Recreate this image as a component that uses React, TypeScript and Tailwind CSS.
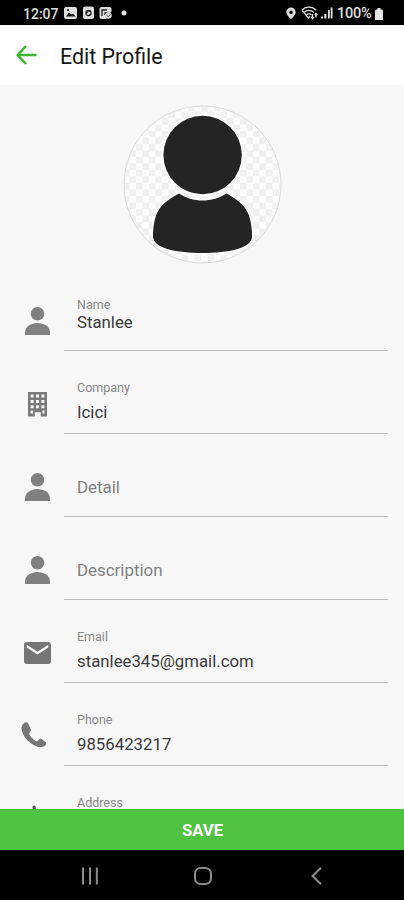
import React from 'react';

type IconName = 'person' | 'company' | 'email' | 'phone' | 'address';

interface Field {
  label: string;
  value?: string;
  icon: IconName;
  compact?: boolean;
}

const FIELDS: Field[] = [
  { label: 'Name', value: 'Stanlee', icon: 'person', compact: true },
  { label: 'Company', value: 'Icici', icon: 'company' },
  { label: 'Detail', icon: 'person' },
  { label: 'Description', icon: 'person' },
  { label: 'Email', value: 'stanlee345@gmail.com', icon: 'email' },
  { label: 'Phone', value: '9856423217', icon: 'phone' },
  { label: 'Address', value: '', icon: 'address' },
];

const FieldIcon: React.FC<{ name: IconName }> = ({ name }) => {
  switch (name) {
    case 'person':
      return (
        <svg className="mt-[38.5px] ml-[25px] h-7 w-[25px]" viewBox="0 0 25 28" fill="#808080">
          <circle cx="12.5" cy="6.8" r="6.8" />
          <path d="M0 28v-2.500C0 19.500 6 16 12.500 16S25 19.500 25 25.500V28z" />
        </svg>
      );
    case 'company':
      return (
        <svg className="mt-[41px] ml-7 h-[25px] w-[19px]" viewBox="0 0 19 25" fill="#7a7a7a">
          <path
            fillRule="evenodd"
            d="M0 0h19v24.500h-6.300v-4.200H6.800v4.200H0zM2.600 2.600v3h3v-3zM8 2.600v3h3v-3zM13.400 2.600v3h3v-3zM2.600 8v3h3V8zM8 8v3h3V8zM13.400 8v3h3V8zM2.600 13.200v3h3v-3zM8 13.200v3h3v-3zM13.400 13.200v3h3v-3zM2.600 18.600v3h2.400v-3zM14.500 18.600v3h2v-3z"
          />
        </svg>
      );
    case 'email':
      return (
        <svg className="mt-[42px] ml-6 h-[22px] w-[27px]" viewBox="2 4 20 16" preserveAspectRatio="none" fill="#757575">
          <path d="M20 4H4c-1.100 0-2 .9-2 2v12c0 1.100.9 2 2 2h16c1.100 0 2-.9 2-2V6c0-1.100-.9-2-2-2zm0 4l-8 5-8-5V6l8 5 8-5z" />
        </svg>
      );
    case 'phone':
      return (
        <svg className="mt-[39px] ml-[21px] h-[26px] w-[26px]" viewBox="0 0 26 26" fill="#757575">
          <path d="M4.500.3C3 .8.800 3 .5 5.500c-.2 5 3.300 10.300 7.200 14 4 3.600 8.500 5.900 12.500 5.600 2.200-.2 4.300-1.300 5-3.100.3-.8.100-1.400-.5-1.900l-4.400-3c-.7-.5-1.500-.4-2.100.1l-2.200 2.300c-3-1.200-6.600-4.700-8-8.100L9.500 9.300c.6-.5.7-1.200.4-1.900L7.100 1.300C6.600.3 5.700-.1 4.500.3z" />
        </svg>
      );
    case 'address':
      return (
        <svg className="mt-[39px] ml-[24px] h-[26px] w-[26px]" viewBox="0 0 26 26" fill="#555">
          <path d="M10 .5c1.200 0 1.800.9 1.800 2.500v3H8.500V2.500C8.500 1.200 9 .5 10 .5z" />
        </svg>
      );
  }
};

const FieldRow: React.FC<{ field: Field }> = ({ field }) => {
  const { label, value, icon, compact } = field;
  return (
    <div className="flex h-[83px] shrink-0">
      <div className="w-16 shrink-0">
        <FieldIcon name={icon} />
      </div>
      <div className="flex h-[83px] w-[324px] flex-col border-b border-[#bdbdbd] pl-[13px]">
        {value !== undefined ? (
          <>
            <span className="mt-[29px] h-4 text-[12.500px] leading-4 text-[#868686]">{label}</span>
            <span
              className={`h-5 text-[16.800px] leading-5 text-[#3a3a3a] ${compact ? '-mt-px' : 'mt-[6px]'}`}
            >
              {value}
            </span>
          </>
        ) : (
          <span className="mt-[43px] h-5 text-[16.900px] leading-5 text-[#808080]">{label}</span>
        )}
      </div>
    </div>
  );
};

const StatusBar: React.FC = () => (
  <div className="flex h-[25px] shrink-0 items-center bg-black pl-[23px] text-[14.500px] leading-none font-medium text-[#dedede]">
    <span className="w-[41px] pt-[3px] text-[14px]">12:07</span>
    <svg className="h-[13px] w-[64px]" viewBox="0 0 64 13" fill="#dedede">
      <rect x="0" y="1" width="13" height="12" rx="2" />
      <path d="M2 10.500l3-4 2.500 2 1.500-1 2.500 3z" fill="#111" />
      <circle cx="4" cy="4" r="1" fill="#111" />
      <rect x="19" y="0.500" width="11" height="12.500" rx="2" />
      <circle cx="24.500" cy="7" r="3.200" fill="#222" />
      <path d="M22.200 8.500l2.300-3 2.500 1.200-2.500 2.300z" />
      <path d="M37.500 1h8a2 2 0 012 2v3l-5 2v5h-5a2 2 0 01-2-2V3a2 2 0 012-2z" />
      <path d="M38 10V4h5M41 9V7h4" fill="none" stroke="#222" strokeWidth="1.300" />
      <circle cx="44.500" cy="9.500" r="3.200" />
      <path d="M43 9.500l1.200 1.200 2-2.200" fill="none" stroke="#222" />
      <circle cx="60" cy="7" r="2.500" />
    </svg>
    <svg className="ml-[157px] h-[14px] w-[50px]" viewBox="285 6.500 50 14" fill="#dedede">
      <path
        fillRule="evenodd"
        d="M291 8a4.700 4.700 0 00-4.700 4.700C286.300 15.500 291 19.500 291 19.500s4.700-4 4.700-6.800A4.700 4.700 0 00291 8zm0 2.900a1.800 1.800 0 110 3.600 1.800 1.800 0 010-3.600z"
      />
      <g fill="none" stroke="#dedede" strokeWidth="1.300">
        <path d="M301.700 10.800c4-4.300 10.600-4.300 14.600 0M304 13c3-2.700 7-2.700 10 0M302 10.800l6.500 7.700 1.500-1.800M306.500 15.500c1.500-1.300 3.500-1.300 5 0" />
        <path d="M312.500 14.500v4.500M311 17.500l1.500 1.500 1.500-1.500M316 18v-4M314.700 15.200l1.300-1.300 1.300 1.300" />
      </g>
      <path d="M321 17h2.200v2H321zM324.300 14.500h2.200V19h-2.200zM328 10.500h1.800V19H328zM330.700 8h1.800v11h-1.800z" />
    </svg>
    <span className="ml-[2px] w-[36px] pt-[3px] text-[14.500px] tracking-[-0.2px]">100%</span>
    <svg className="mt-[2px] ml-[2px] h-[12px] w-[8px]" viewBox="0 0 9 12" preserveAspectRatio="none" fill="#e5e5e5">
      <path d="M2.700 0h3.600v1.500H7.500A1.500 1.500 0 019 3v9H0V3a1.500 1.500 0 011.500-1.500h1.200z" />
    </svg>
  </div>
);

const Header: React.FC = () => (
  <header className="flex h-[60px] shrink-0 items-center bg-white pl-4">
    <svg className="mb-px h-5 w-[21px]" viewBox="0 0 21 20" fill="none" stroke="#3bb52f" strokeWidth="2.400">
      <path d="M10 1L1.700 10l8.300 9M2 10h18.500" />
    </svg>
    <h1 className="mt-[3px] ml-[23px] text-[21.400px] leading-6 text-[#161616]">Edit Profile</h1>
  </header>
);

const Avatar: React.FC = () => (
  <svg className="mt-5 ml-[123px] h-[160px] w-[160px] shrink-0" viewBox="0 0 160 160">
    <defs>
      <pattern id="checks" width="13" height="13" patternUnits="userSpaceOnUse">
        <rect width="13" height="13" fill="#fdfdfd" />
        <path d="M0 0h6.500v6.500H0zM6.500 6.500h6.500v6.500H6.500z" fill="#f0f0f0" />
      </pattern>
    </defs>
    <circle cx="79.500" cy="79.500" r="78.500" fill="url(#checks)" stroke="#dadada" />
    <path
      d="M56 88.500C63 93 71 95.500 79.500 95.500s17-2.500 24-7c11 6 19 12 22.500 22 2 6 3.200 14 3 21-.2 12-24 16.500-49.500 16.500s-49-4.500-49.500-16.500c-.2-7 1-15 3-21 3.500-10 12-16 23-22z"
      fill="#242424"
      stroke="#fff"
      strokeWidth="2.500"
      paintOrder="stroke"
    />
    <circle cx="79.600" cy="50" r="41" fill="#fff" />
    <circle cx="79.600" cy="50" r="39.200" fill="#242424" />
  </svg>
);

const NavBar: React.FC = () => (
  <nav className="flex h-[50px] shrink-0 items-center bg-black pt-[2px] pl-[81px]">
    <svg className="h-[18px] w-[18px]" viewBox="0 0 18 18" fill="none" stroke="#8c8c8c" strokeWidth="2">
      <path d="M2 .5v17M9 .5v17M15.800 .5v17" />
    </svg>
    <svg className="ml-[95px] h-[18px] w-[18px]" viewBox="0 0 18 18" fill="none" stroke="#8c8c8c" strokeWidth="2">
      <rect x="1" y="1" width="16" height="16" rx="5.500" />
    </svg>
    <svg className="ml-[98px] h-[18px] w-[14px]" viewBox="0 0 14 18" fill="none" stroke="#8c8c8c" strokeWidth="2">
      <path d="M11 .8L2.500 9l8.500 8.200" />
    </svg>
  </nav>
);

const App: React.FC = () => (
  <div className="flex h-[900px] w-[404px] flex-col overflow-hidden bg-[#f7f7f7] font-['Roboto',sans-serif]">
    <StatusBar />
    <Header />
    <main className="flex min-h-0 flex-1 flex-col overflow-hidden">
      <Avatar />
      <div className="mt-[3px] flex shrink-0 flex-col">
        {FIELDS.map((field) => (
          <FieldRow key={field.label} field={field} />
        ))}
      </div>
    </main>
    <button className="h-[41px] shrink-0 bg-[#50c242] pt-[3px] pl-px text-[16.700px] leading-none font-bold text-white">
      SAVE
    </button>
    <NavBar />
  </div>
);

export default App;
